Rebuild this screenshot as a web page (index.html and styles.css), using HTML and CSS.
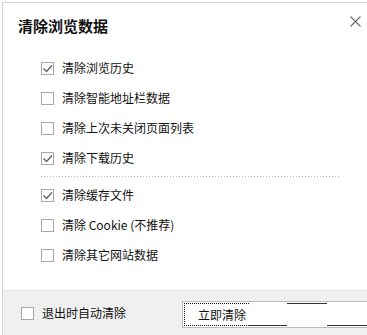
FILE: index.html
```html
<!DOCTYPE html>
<html lang="zh-CN">
<head>
    <meta charset="UTF-8">
    <title>清除浏览数据</title>
    <link rel="stylesheet" href="styles.css">
</head>
<body>
    <div class="dialog">
        <div class="header">
            <span class="title">清除浏览数据</span>
            <svg class="close" width="11" height="11" viewBox="0 0 11 11">
                <path d="M0.5 0.5 L10.5 10.5 M10.5 0.5 L0.5 10.5" stroke="#6e6e6e" stroke-width="1.1" fill="none"/>
            </svg>
        </div>

        <div class="options">
            <label class="row"><span class="box checked"><svg width="11" height="11" viewBox="0 0 11 11"><path d="M1.5 5.5 L4.5 8.5 L10 2.5" stroke="#616161" stroke-width="1.4" fill="none"/></svg></span>清除浏览历史</label>
            <label class="row"><span class="box"></span>清除智能地址栏数据</label>
            <label class="row"><span class="box"></span>清除上次未关闭页面列表</label>
            <label class="row"><span class="box checked"><svg width="11" height="11" viewBox="0 0 11 11"><path d="M1.5 5.5 L4.5 8.5 L10 2.5" stroke="#616161" stroke-width="1.4" fill="none"/></svg></span>清除下载历史</label>

            <div class="divider"></div>

            <label class="row"><span class="box checked"><svg width="11" height="11" viewBox="0 0 11 11"><path d="M1.5 5.5 L4.5 8.5 L10 2.5" stroke="#616161" stroke-width="1.4" fill="none"/></svg></span>清除缓存文件</label>
            <label class="row"><span class="box"></span>清除 Cookie (不推荐)</label>
            <label class="row"><span class="box"></span>清除其它网站数据</label>
        </div>

        <div class="footer">
            <label class="auto"><span class="box"></span>退出时自动清除</label>
            <button class="clear-btn">
                <span class="focus-ring"></span>
                <span class="seg seg-top"></span>
                <span class="seg seg-bottom1"></span>
                <span class="seg seg-bottom2"></span>
                立即清除
            </button>
        </div>
    </div>
</body>
</html>
```

FILE: styles.css
```css
html, body {
    margin: 0;
    padding: 0;
    height: 335px;
    overflow: hidden;
    background: #ffffff;
}

body {
    font-family: "Noto Sans CJK SC", "Noto Sans", sans-serif;
    font-size: 12px;
    color: #111111;
    padding: 2px 0 0 2px;
    box-sizing: border-box;
}

.dialog {
    height: 333px;
    border-top: 1px solid #d4d4d4;
    border-left: 1px solid #d4d4d4;
    display: flex;
    flex-direction: column;
    box-sizing: border-box;
}

.header {
    height: 50px;
    box-sizing: border-box;
    padding: 12px 6px 0 15px;
    display: flex;
    justify-content: space-between;
    align-items: flex-start;
}

.title {
    font-size: 15px;
    font-weight: bold;
    line-height: 22px;
    color: #111111;
}

.close {
    margin-top: 1px;
}

.options {
    flex: 1;
    padding-left: 38px;
}

.row {
    height: 30px;
    display: flex;
    align-items: center;
    gap: 8px;
    line-height: 16px;
}

.box {
    width: 13px;
    height: 13px;
    box-sizing: border-box;
    border: 1px solid #a8a8a8;
    background: #ffffff;
    display: flex;
    align-items: center;
    justify-content: center;
    flex-shrink: 0;
}

.divider {
    height: 1px;
    margin: 3px 0 3px;
    width: 300px;
    background: repeating-linear-gradient(to right, #c2b6a0 0 1px, transparent 1px 3px);
}

.footer {
    height: 45px;
    box-sizing: border-box;
    background: #f0f0f0;
    border-top: 1px solid #e3e3e3;
    display: flex;
    align-items: center;
    padding-left: 18px;
}

.auto {
    display: flex;
    align-items: center;
    gap: 8px;
    width: 161px;
    flex-shrink: 0;
    line-height: 16px;
}

.clear-btn {
    position: relative;
    width: 200px;
    height: 27px;
    margin-top: 2px;
    border: 1px solid #bdbdbd;
    background: #ffffff;
    font-family: inherit;
    font-size: 12px;
    color: #111111;
    text-align: left;
    padding: 0 0 0 15px;
    flex-shrink: 0;
}

.focus-ring {
    position: absolute;
    left: 1px;
    top: 1px;
    width: 65px;
    height: 23px;
    border: 1px dotted #111111;
    border-right: none;
    box-sizing: border-box;
}

.seg {
    position: absolute;
    height: 1px;
    width: 40px;
    background: #333333;
}

.seg-top {
    left: 104px;
    top: 1px;
}

.seg-bottom1 {
    left: 65px;
    bottom: 1px;
    width: 39px;
}

.seg-bottom2 {
    left: 144px;
    bottom: 1px;
}
```
